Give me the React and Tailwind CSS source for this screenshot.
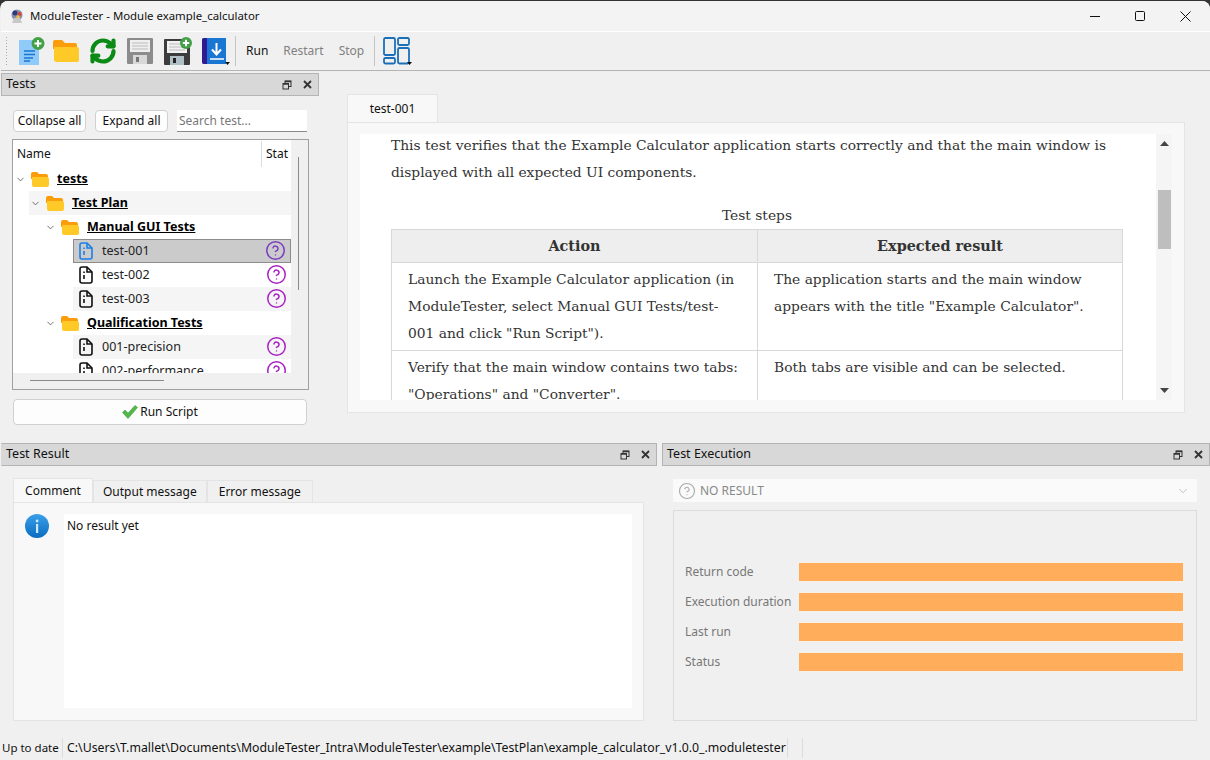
import { ChevronDown, CircleHelp, RefreshCw } from "lucide-react";

const serif = "font-['DejaVu_Serif',serif]";

function FloatClose() {
  return (
    <div className="flex items-center gap-[11px]">
      <svg width="10" height="10" viewBox="0 0 10 10" fill="none" stroke="#333" strokeWidth="1">
        <rect x="3" y="1" width="6" height="5.5" />
        <rect x="1" y="3.5" width="5.5" height="5.5" fill="#d8d8d8" />
        <path d="M3 1.5h6M1 4h5" strokeWidth="1.4" />
      </svg>
      <svg width="9" height="9" viewBox="0 0 9 9" stroke="#333" strokeWidth="1.8">
        <path d="M1 1l7 7M8 1l-7 7" />
      </svg>
    </div>
  );
}

function DockTitle({ title, className }) {
  return (
    <div className={`h-[23px] shrink-0 flex items-center justify-between pl-[4px] pr-[6px] bg-[#d8d8d8] border border-[#b4b4b4] text-[12.5px] text-[#111] ${className}`}>
      <span>{title}</span>
      <FloatClose />
    </div>
  );
}

function Folder() {
  return (
    <svg width="18" height="15" viewBox="0 0 18 15" className="shrink-0">
      <path d="M0 2a2 2 0 0 1 2-2h4l2 2h7a2 2 0 0 1 2 2v3H0z" fill="#fb9c0c" />
      <path d="M1 5h15a2 2 0 0 1 2 2v6a2 2 0 0 1-2 2H3a2 2 0 0 1-2-2z" fill="#ffca28" />
    </svg>
  );
}

function FileIcon({ color = "#111" }) {
  return (
    <svg width="14" height="18" viewBox="0 0 14 18" fill="none" stroke={color} strokeWidth="1.6" className="shrink-0">
      <path d="M3 1h5l5 5v9a2 2 0 0 1-2 2H3a2 2 0 0 1-2-2V3a2 2 0 0 1 2-2z" />
      <path d="M8 1v5h5" />
      <path d="M5 5.5v1.5M5 9v4" strokeWidth="1.6" />
    </svg>
  );
}

function FolderRow({ label, indent, alt }) {
  return (
    <div className="h-6 flex items-center shrink-0" style={{ paddingLeft: indent }}>
      <div className={`flex items-center h-6 flex-1 pl-[2px] -ml-[2px] ${alt ? "bg-[#f5f5f5]" : ""}`}>
        <ChevronDown size={11} strokeWidth={1.5} className="text-[#333] mr-[5px] -ml-[1px]" />
        <Folder />
        <span className="ml-[8px] font-bold underline text-[12.5px] text-black">{label}</span>
      </div>
    </div>
  );
}

function TestRow({ label, alt, selected }) {
  let bg = "";
  if (alt) bg = "bg-[#f5f5f5]";
  if (selected) bg = "bg-[#cbcbcb] border border-[#8c8c8c]";
  return (
    <div className={`h-6 shrink-0 ml-[60px] flex items-center pr-[4px] ${selected ? "pl-[5px]" : "pl-[6px]"} ${bg}`}>
      <FileIcon color={selected ? "#1a7fe8" : "#111"} />
      <span className="ml-[9px] text-[12.5px] text-[#222] flex-1">{label}</span>
      <CircleHelp size={21} strokeWidth={1.7} className={`-mt-[2px] ${selected ? "text-[#7a3cc4]" : "text-[#a81fc4]"}`} />
    </div>
  );
}

function TestsDock() {
  return (
    <div className="w-[318px] shrink-0 flex flex-col">
      <DockTitle title="Tests" className="mt-[2px]" />
      <div className="flex-1 pl-[11px] pr-[10px] flex flex-col">
        <div className="flex items-center mt-[14px] h-[22px]">
          <button className="w-[73px] h-[22px] ml-[1px] rounded-[4px] bg-[#fdfdfd] border border-[#d0d0d0] text-[12px] text-[#111]">Collapse all</button>
          <button className="w-[73px] h-[22px] ml-[9px] rounded-[4px] bg-[#fdfdfd] border border-[#d0d0d0] text-[12px] text-[#111]">Expand all</button>
          <div className="w-[130px] h-[22px] ml-[9px] bg-white border-b border-[#8a8a8a] flex items-center pl-[2px] text-[12px] text-[#777]">Search test...</div>
        </div>
        <div className="mt-[7px] h-[251px] border border-[#a0a0a0] bg-[#f0f0f0] flex flex-col overflow-hidden">
          <div className="flex h-[233px] shrink-0">
            <div className="w-[278px] bg-white flex flex-col overflow-hidden">
              <div className="h-[27px] shrink-0 flex items-center text-[12px] text-[#111]">
                <span className="w-[249px] pl-[4px] h-[26px] flex items-center border-r border-[#dcdcdc]">Name</span>
                <span className="pl-[4px]">Stat</span>
              </div>
              <FolderRow label="tests" indent={3} />
              <FolderRow label="Test Plan" indent={18} alt />
              <FolderRow label="Manual GUI Tests" indent={33} />
              <TestRow label="test-001" selected />
              <TestRow label="test-002" />
              <TestRow label="test-003" alt />
              <FolderRow label="Qualification Tests" indent={33} />
              <TestRow label="001-precision" alt />
              <TestRow label="002-performance" />
            </div>
            <div className="flex-1 pl-[7px]">
              <div className="w-[1px] h-[133px] mt-[17px] bg-[#8a8a8a]" />
            </div>
          </div>
          <div className="h-[1px] w-[134px] ml-[17px] mt-[7px] bg-[#8a8a8a]" />
        </div>
        <button className="mt-[9px] ml-[1px] w-[294px] h-[26px] shrink-0 rounded-[4px] bg-[#fdfdfd] border border-[#d0d0d0] flex items-center justify-center text-[12px] text-[#111]">
          <svg width="16" height="14" viewBox="0 0 16 14" className="mr-[2px]">
            <path d="M0.5 7.5L3 5l3 3.2L13 0.5l2.5 2L6 13.5z" fill="#52b848" stroke="#3a9a3a" strokeWidth="0.6" />
          </svg>
          Run Script
        </button>
      </div>
    </div>
  );
}

function TestView() {
  return (
    <div className="flex-1 pl-[28px] pr-[25px] pt-[23px] flex flex-col">
      <div className="h-[28px] w-[91px] bg-[#f8f8f8] border border-b-0 border-[#e4e4e4] flex items-center justify-center text-[12px] text-[#111] shrink-0">test-001</div>
      <div className="h-[291px] shrink-0 bg-[#f8f8f8] border border-[#e4e4e4] pt-[11px] pb-[12px] pl-[12px] pr-[12px] flex">
        <div className={`w-[796px] bg-white overflow-hidden pl-[31px] pr-[33px] text-[#333] text-[13.8px] leading-[27px] ${serif}`}>
          <p className="-mt-[2px]">This test verifies that the Example Calculator application starts correctly and that the main window is displayed with all expected UI components.</p>
          <div className="text-center mt-[16px] h-[27px]">Test steps</div>
          <div className="border border-[#d8d8d8] w-[732px]">
            <div className="flex h-[33px] pb-[1px] bg-[#eeeeee] border-b border-[#d8d8d8] font-bold text-[14.4px]">
              <div className="w-[366px] border-r border-[#d8d8d8] flex items-center justify-center">Action</div>
              <div className="flex-1 flex items-center justify-center">Expected result</div>
            </div>
            <div className="flex h-[88px] border-b border-[#d8d8d8]">
              <div className="w-[366px] border-r border-[#d8d8d8] pl-[16px] pr-[16px] pt-[3px]">Launch the Example Calculator application (in ModuleTester, select Manual GUI Tests/test-001 and click "Run Script").</div>
              <div className="flex-1 pl-[16px] pr-[8px] pt-[3px]">The application starts and the main window appears with the title "Example Calculator".</div>
            </div>
            <div className="flex h-[88px]">
              <div className="w-[366px] border-r border-[#d8d8d8] pl-[16px] pr-[8px] pt-[3px]">Verify that the main window contains two tabs: "Operations" and "Converter".</div>
              <div className="flex-1 pl-[16px] pr-[8px] pt-[3px]">Both tabs are visible and can be selected.</div>
            </div>
          </div>
        </div>
        <div className="flex-1 bg-[#f5f5f5] flex flex-col items-center pt-[7px] pb-[7px]">
          <svg width="9" height="5" viewBox="0 0 9 5" className="shrink-0"><path d="M4.5 0L9 5H0z" fill="#444" /></svg>
          <div className="w-[13px] h-[59px] mt-[44px] bg-[#bebebe]" />
          <svg width="9" height="5" viewBox="0 0 9 5" className="mt-auto shrink-0"><path d="M4.5 5L9 0H0z" fill="#444" /></svg>
        </div>
      </div>
    </div>
  );
}

function ResultTab({ label, active, wide }) {
  return active ? (
    <div className="w-[80px] h-[24px] bg-[#f8f8f8] border border-b-0 border-[#e4e4e4] flex items-center justify-center text-[12px] text-[#111]">{label}</div>
  ) : (
    <div className={`h-[22px] bg-[#f0f0f0] border border-b-0 border-[#e4e4e4] flex items-center justify-center text-[12px] text-[#111] ${wide ? "px-[11px]" : "px-[9px]"}`}>{label}</div>
  );
}

function TestResult() {
  return (
    <div className="w-[656px] shrink-0 flex flex-col">
      <DockTitle title="Test Result" className="border-l-[#d8d8d8]" />
      <div className="flex-1 pl-[12px] pr-[13px] pt-[12px] flex flex-col">
        <div className="flex items-end">
          <ResultTab label="Comment" active />
          <ResultTab label="Output message" />
          <ResultTab label="Error message" wide />
        </div>
        <div className="h-[219px] bg-[#f8f8f8] border border-[#e4e4e4] flex pl-[11px] pt-[11px] pr-[11px]">
          <svg width="24" height="24" viewBox="0 0 24 24" className="shrink-0">
            <defs>
              <linearGradient id="infoBlue" x1="0" y1="0" x2="0" y2="1">
                <stop offset="0" stopColor="#3aa0ea" />
                <stop offset="1" stopColor="#0a6cc0" />
              </linearGradient>
            </defs>
            <circle cx="12" cy="12" r="12" fill="url(#infoBlue)" />
            <rect x="11" y="10" width="2.2" height="9" fill="#cfe8fb" />
            <circle cx="12.1" cy="7" r="1.4" fill="#cfe8fb" />
          </svg>
          <div className="flex-1 h-[194px] ml-[15px] bg-white pl-[3px] pt-[3px] text-[12px] text-[#111]">No result yet</div>
        </div>
      </div>
    </div>
  );
}

function ExecRow({ label }) {
  return (
    <div className="flex items-center h-[30px] shrink-0">
      <span className="w-[113px] shrink-0 text-[12px] text-[#777]">{label}</span>
      <div className="w-[386px] shrink-0 h-[20px] bg-[#ffad5b] border border-[#f5f0e8]" />
    </div>
  );
}

function TestExecution() {
  return (
    <div className="flex-1 ml-[5px] flex flex-col">
      <DockTitle title="Test Execution" />
      <div className="flex-1 pl-[11px] pr-[13px] pt-[13px] flex flex-col">
        <div className="h-[23px] bg-[#fafafa] flex items-center pl-[5px] pr-[7px] text-[12px] text-[#888] shrink-0">
          <CircleHelp size={18} strokeWidth={1.5} className="text-[#aaa]" />
          <span className="ml-[4px] flex-1">NO RESULT</span>
          <ChevronDown size={14} strokeWidth={1} className="text-[#999]" />
        </div>
        <div className="mt-[8px] h-[211px] border border-[#dcdcdc] pl-[11px] pt-[46px] flex flex-col">
          <ExecRow label="Return code" />
          <ExecRow label="Execution duration" />
          <ExecRow label="Last run" />
          <ExecRow label="Status" />
        </div>
      </div>
    </div>
  );
}

function Toolbar() {
  return (
    <div className="h-[39px] shrink-0 bg-[#f0f0f0] border-b border-[#b4b4b4] flex items-center pl-[4px]">
      <div className="h-[30px] w-[3px] bg-[radial-gradient(#aaa_1px,transparent_1px)] bg-[length:3px_3px]" />
      {/* new */}
      <svg width="26" height="28" viewBox="0 0 26 28" className="ml-[11px]">
        <rect x="0" y="3" width="20" height="25" fill="#90caf9" />
        <path d="M5 14h11M5 17.5h11M5 21h9M5 24h6" stroke="#1976d2" strokeWidth="1.3" />
        <circle cx="19" cy="6.5" r="6.5" fill="#43a047" />
        <path d="M19 3v7M15.5 6.5h7" stroke="#fff" strokeWidth="2" />
      </svg>
      {/* open */}
      <svg width="26" height="24" viewBox="0 0 26 24" className="ml-[8px]">
        <path d="M0 3a2 2 0 0 1 2-2h7l3 3h10a2 2 0 0 1 2 2v4H0z" fill="#fb9c0c" />
        <path d="M1 8h23a2 2 0 0 1 2 2v11a2 2 0 0 1-2 2H4a2.5 2.5 0 0 1-3-3z" fill="#ffca28" />
      </svg>
      <RefreshCw size={28} strokeWidth={3.6} className="ml-[10px] text-[#0b8a16]" />
      {/* save, disabled */}
      <svg width="26" height="26" viewBox="0 0 26 26" className="ml-[10px]">
        <rect width="26" height="26" rx="1" fill="#8c8c8c" />
        <rect x="3" y="2" width="20" height="12" fill="#efefef" />
        <path d="M5 5h16M5 8h16M5 11h16" stroke="#bbb" strokeWidth="1" />
        <rect x="6" y="17" width="14" height="9" fill="#d8d8d8" />
        <rect x="9" y="19" width="3" height="5" fill="#777" />
      </svg>
      {/* save as */}
      <svg width="29" height="28" viewBox="0 0 29 28" className="ml-[11px]">
        <rect y="2" width="26" height="26" rx="1" fill="#3c3c3c" />
        <rect x="3" y="4" width="20" height="12" fill="#f2f2f2" />
        <path d="M5 7h16M5 10h16M5 13h16" stroke="#bbb" strokeWidth="1" />
        <rect x="6" y="19" width="14" height="9" fill="#b0bec5" />
        <rect x="9" y="21" width="3" height="5" fill="#222" />
        <circle cx="22" cy="6" r="6" fill="#43a047" />
        <path d="M22 2.8v6.4M18.8 6h6.4" stroke="#fff" strokeWidth="2" />
      </svg>
      {/* import */}
      <svg width="28" height="28" viewBox="0 0 28 28" className="ml-[9px]">
        <path d="M2 1h22v26H2a2 2 0 0 1-2-2V3a2 2 0 0 1 2-2z" fill="#1976d2" />
        <path d="M2 1h3v26H2a2 2 0 0 1-2-2V3a2 2 0 0 1 2-2z" fill="#311b92" />
        <path d="M14.5 6v10M10 12.5l4.5 5 4.5-5" stroke="#fff" strokeWidth="2" fill="none" />
        <path d="M8 22h14" stroke="#fff" strokeWidth="1.4" />
        <path d="M23 25h5l-2.500 3z" fill="#111" />
      </svg>
      <div className="w-[1px] h-[30px] bg-[#c4c4c4] ml-[5px]" />
      <span className="ml-[10px] text-[12px] text-[#111]">Run</span>
      <span className="ml-[15px] text-[12px] text-[#808080]">Restart</span>
      <span className="ml-[15px] text-[12px] text-[#808080]">Stop</span>
      <div className="w-[1px] h-[30px] bg-[#c4c4c4] ml-[10px]" />
      {/* layouts */}
      <svg width="30" height="28" viewBox="0 0 30 28" fill="none" stroke="#1a6fb8" strokeWidth="1.8" className="ml-[8px]">
        <rect x="1" y="1" width="11" height="17" rx="1.5" />
        <rect x="1" y="21" width="11" height="5.500" rx="1.5" />
        <rect x="15" y="1" width="11" height="7" rx="1.5" />
        <rect x="15" y="11" width="11" height="15.500" rx="1.5" />
        <path d="M24 25h5l-2.500 3z" fill="#111" stroke="none" />
      </svg>
    </div>
  );
}

export default function App() {
  return (
    <div className="w-[1210px] h-[760px] bg-[#333] overflow-hidden font-['Noto_Sans',sans-serif]">
      <div className="w-full h-full mt-[1px] pl-[1px] rounded-t-[8px] overflow-hidden bg-[#f0f0f0] flex flex-col">
        <div className="h-[31px] shrink-0 bg-[#f3f3f3] border-b border-white flex items-center pl-[8px]">
          <svg width="16" height="16" viewBox="0 0 16 16">
            <circle cx="8" cy="7" r="5.500" fill="#8a8fa8" />
            <circle cx="6" cy="5" r="2.500" fill="#2a3a80" />
            <circle cx="10.500" cy="6" r="2" fill="#d8443c" />
            <circle cx="9" cy="9" r="1.800" fill="#f0c040" />
            <path d="M3 15l2-5h6l2 5z" fill="#c8c8c8" />
          </svg>
          <span className="ml-[5px] text-[11.4px] text-[#111]">ModuleTester - Module example_calculator</span>
          <div className="ml-auto flex items-center">
            <div className="w-[10px] h-[1px] bg-[#111] mr-[35px]" />
            <div className="w-[10px] h-[10px] border border-[#111] rounded-[1.500px] mr-[35px]" />
            <svg width="11" height="11" viewBox="0 0 11 11" stroke="#111" strokeWidth="1" className="mr-[19px]">
              <path d="M0.500 0.500l10 10M10.500 0.500l-10 10" />
            </svg>
          </div>
        </div>
        <Toolbar />
        <div className="h-[372px] shrink-0 flex">
          <TestsDock />
          <TestView />
        </div>
        <div className="h-[292px] shrink-0 flex">
          <TestResult />
          <TestExecution />
        </div>
        <div className="flex-1 flex items-center text-[12.3px] text-[#111] pl-[1px] whitespace-nowrap">
          <span className="w-[61px] h-[20px] flex items-center border-r border-[#dcdcdc] text-[11.5px]">Up to date</span>
          <span className="w-[725px] h-[20px] pl-[4px] flex items-center border-r border-[#dcdcdc]">C:\Users\T.mallet\Documents\ModuleTester_Intra\ModuleTester\example\TestPlan\example_calculator_v1.0.0_.moduletester</span>
          <span className="w-[15px] h-[20px] border-r border-[#dcdcdc]" />
        </div>
      </div>
    </div>
  );
}
